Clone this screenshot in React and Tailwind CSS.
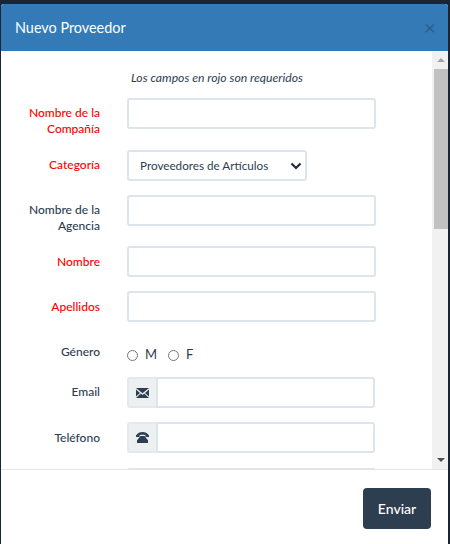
import React from "react";

const Label = ({ children, red, className = "" }) => (
  <div className={`w-[99px] shrink-0 text-right text-[12px] leading-[16px] font-medium ${red ? "text-[#ff0000]" : "text-[#2c3e50]"} ${className}`}>
    {children}
  </div>
);

const Field = ({ className = "" }) => (
  <div className={`w-[249px] h-[31px] bg-white border-2 border-[#dce4ec] rounded-[3px] ${className}`} />
);

const Addon = ({ children }) => (
  <div className="flex w-[248px] h-[31px]">
    <div className="w-[29px] shrink-0 flex items-center justify-center bg-[#ecf0f1] border-2 border-r-0 border-[#e4e9ee] rounded-l-[3px]">
      {children}
    </div>
    <div className="flex-1 bg-white border-2 border-[#dce4ec] rounded-r-[3px]" />
  </div>
);

const Radio = ({ label }) => (
  <div className="flex items-center">
    <div className="w-[11px] h-[11px] mt-[2px] rounded-full border border-[#767676] bg-white" />
    <span className="ml-[7px] text-[13px] leading-[16px] text-[#2c3e50]">{label}</span>
  </div>
);

export default function App() {
  return (
    <div className="w-[450px] h-[544px] bg-[#1b2430] pt-[4px] pl-[1px] pr-[2px] overflow-hidden font-['Lato',sans-serif]">
      <div className="w-[447px] h-[540px] bg-white flex flex-col rounded-t-[3px] overflow-hidden">
        <div className="h-[47px] shrink-0 bg-[#337ab7] flex items-center justify-between pl-[14px] pr-[12px]">
          <span className="text-[14.4px] text-white">Nuevo Proveedor</span>
          <span className="text-[#2c5f8f] text-[21px] leading-none font-['Liberation_Sans',sans-serif]">×</span>
        </div>
        <div className="h-[419px] shrink-0 flex border-b border-[#e5e5e5] overflow-hidden">
          <div className="flex-1 overflow-hidden">
            <p className="mt-[19px] ml-[130px] text-[12.2px] leading-[16px] italic text-[#2c3e50]">Los campos en rojo son requeridos</p>
            <div className="mt-[12px] flex gap-[27px]">
              <Label red className="pt-[7px]">Nombre de la Compañía</Label>
              <Field />
            </div>
            <div className="mt-[13px] flex gap-[27px]">
              <Label red className="pt-[7px]">Categoría</Label>
              <div className="w-[180px] h-[31px] bg-white border-2 border-[#dce4ec] rounded-[3px] flex items-center justify-between pl-[11px] pr-[3px]">
                <span className="text-[11.7px] text-[#2c3e50]">Proveedores de Artículos</span>
                <svg width="12" height="8" viewBox="0 0 12 8" fill="none" stroke="#1f2d3a" strokeWidth="2.2">
                  <path d="M1.500 1.500 6 6l4.500-4.500" />
                </svg>
              </div>
            </div>
            <div className="mt-[14px] flex gap-[27px]">
              <Label className="pt-[7px]">Nombre de la Agencia</Label>
              <Field />
            </div>
            <div className="mt-[12px] flex gap-[27px]">
              <Label red className="pt-[8px]">Nombre</Label>
              <Field />
            </div>
            <div className="mt-[14px] flex gap-[27px]">
              <Label red className="pt-[8px]">Apellidos</Label>
              <Field />
            </div>
            <div className="mt-[22px] h-[18px] flex gap-[27px]">
              <Label>Género</Label>
              <div className="flex gap-[11px] pt-[2px]">
                <Radio label="M" />
                <Radio label="F" />
              </div>
            </div>
            <div className="mt-[15px] flex gap-[27px]">
              <Label className="pt-[7px]">Email</Label>
              <Addon>
                <svg width="13" height="10" viewBox="0 0 13 10">
                  <path fill="#2c3e50" d="M0 0h13L6.500 5.200zM0 1.600 4 4.900 0 8.600zM13 1.600 9 4.900l4 3.700zM4.800 5.600l1.700 1.300 1.700-1.300L13 10H0z" />
                </svg>
              </Addon>
            </div>
            <div className="mt-[14px] flex gap-[27px]">
              <Label className="pt-[8px]">Teléfono</Label>
              <Addon>
                <svg width="13" height="11" viewBox="0 0 13 11">
                  <path fill="#2c3e50" d="M0 3.600C1.500 1 4 0 6.500 0S11.500 1 13 3.600V5H9.500V3.200c-2-.5-4-.5-6 0V5H0zM4.500 4h4l3.500 4.200V11H1V8.200z" />
                </svg>
              </Addon>
            </div>
            <div className="mt-[15px] flex gap-[27px]">
              <div className="w-[99px] shrink-0" />
              <Field />
            </div>
          </div>
          <div className="w-[16px] shrink-0 bg-[#f1f1f1] flex flex-col items-center relative">
            <div className="h-[18px] flex items-center justify-center pl-[2px]">
              <div className="w-0 h-0 border-x-[4px] border-x-transparent border-b-[4px] border-b-[#a3a3a3]" />
            </div>
            <div className="ml-[2px] w-[14px] h-[160px] bg-[#c1c1c1]" />
            <div className="mt-auto h-[18px] flex items-center justify-center pl-[2px]">
              <div className="w-0 h-0 border-x-[4px] border-x-transparent border-t-[4px] border-t-[#505050]" />
            </div>
          </div>
        </div>
        <div className="flex-1 flex items-start justify-end pt-[18px] pr-[17px]">
          <button className="w-[68px] h-[41px] rounded-[4px] bg-[#2c3e50] text-white text-[14px] font-medium">Enviar</button>
        </div>
      </div>
    </div>
  );
}
